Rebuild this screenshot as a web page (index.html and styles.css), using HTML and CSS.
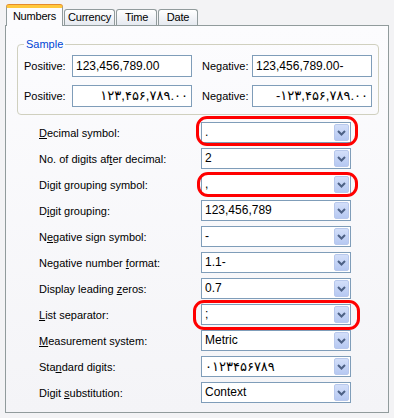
FILE: index.html
```html
<html>
<head>
	<title>Regional Options - Numbers</title>
	<meta charset="utf-8">
	<link rel="stylesheet" href="styles.css">
</head>
<body>
	<div class="dialog">
		<div class="tabs">
			<div class="tab active t-numbers">Numbers</div>
			<div class="tab t-currency">Currency</div>
			<div class="tab t-time">Time</div>
			<div class="tab t-date">Date</div>
		</div>

		<div class="page">
			<fieldset class="sample">
				<legend>Sample</legend>
				<div class="sample-grid">
					<span class="lbl">Positive:</span>
					<div class="box">123,456,789.00</div>
					<span class="lbl neg">Negative:</span>
					<div class="box">123,456,789.00-</div>

					<span class="lbl">Positive:</span>
					<div class="box rtl"><bdo dir="ltr">۱۲۳,۴۵۶,۷۸۹.۰۰</bdo></div>
					<span class="lbl neg">Negative:</span>
					<div class="box rtl"><bdo dir="ltr">-۱۲۳,۴۵۶,۷۸۹.۰۰</bdo></div>
				</div>
			</fieldset>

			<div class="settings">
				<div class="row">
					<span class="label"><u>D</u>ecimal symbol:</span>
					<div class="combo mark mark-1"><span class="value">.</span><span class="btn"><svg width="9" height="6" viewBox="0 0 9 6"><polyline points="1,1 4.5,4.5 8,1" /></svg></span></div>
				</div>
				<div class="row">
					<span class="label">No. of digits af<u>t</u>er decimal:</span>
					<div class="combo"><span class="value">2</span><span class="btn"><svg width="9" height="6" viewBox="0 0 9 6"><polyline points="1,1 4.5,4.5 8,1" /></svg></span></div>
				</div>
				<div class="row">
					<span class="label">Digit grouping symbol:</span>
					<div class="combo mark mark-2"><span class="value">,</span><span class="btn"><svg width="9" height="6" viewBox="0 0 9 6"><polyline points="1,1 4.5,4.5 8,1" /></svg></span></div>
				</div>
				<div class="row">
					<span class="label">D<u>i</u>git grouping:</span>
					<div class="combo"><span class="value">123,456,789</span><span class="btn"><svg width="9" height="6" viewBox="0 0 9 6"><polyline points="1,1 4.5,4.5 8,1" /></svg></span></div>
				</div>
				<div class="row">
					<span class="label">N<u>e</u>gative sign symbol:</span>
					<div class="combo"><span class="value">-</span><span class="btn"><svg width="9" height="6" viewBox="0 0 9 6"><polyline points="1,1 4.5,4.5 8,1" /></svg></span></div>
				</div>
				<div class="row">
					<span class="label">Negative number <u>f</u>ormat:</span>
					<div class="combo"><span class="value">1.1-</span><span class="btn"><svg width="9" height="6" viewBox="0 0 9 6"><polyline points="1,1 4.5,4.5 8,1" /></svg></span></div>
				</div>
				<div class="row">
					<span class="label">Display leading <u>z</u>eros:</span>
					<div class="combo"><span class="value">0.7</span><span class="btn"><svg width="9" height="6" viewBox="0 0 9 6"><polyline points="1,1 4.5,4.5 8,1" /></svg></span></div>
				</div>
				<div class="row">
					<span class="label"><u>L</u>ist separator:</span>
					<div class="combo mark mark-3"><span class="value">;</span><span class="btn"><svg width="9" height="6" viewBox="0 0 9 6"><polyline points="1,1 4.5,4.5 8,1" /></svg></span></div>
				</div>
				<div class="row">
					<span class="label"><u>M</u>easurement system:</span>
					<div class="combo"><span class="value">Metric</span><span class="btn"><svg width="9" height="6" viewBox="0 0 9 6"><polyline points="1,1 4.5,4.5 8,1" /></svg></span></div>
				</div>
				<div class="row">
					<span class="label">Sta<u>n</u>dard digits:</span>
					<div class="combo"><span class="value fa"><bdo dir="ltr">۰۱۲۳۴۵۶۷۸۹</bdo></span><span class="btn"><svg width="9" height="6" viewBox="0 0 9 6"><polyline points="1,1 4.5,4.5 8,1" /></svg></span></div>
				</div>
				<div class="row">
					<span class="label">Digit <u>s</u>ubstitution:</span>
					<div class="combo"><span class="value">Context</span><span class="btn"><svg width="9" height="6" viewBox="0 0 9 6"><polyline points="1,1 4.5,4.5 8,1" /></svg></span></div>
				</div>
			</div>
		</div>
	</div>
</body>
</html>
```

FILE: styles.css
```css
* {
	box-sizing:border-box;
}
body {
	margin:0;
	background-color:#f3f3f5;
	color:#000;
	font-family:"Liberation Sans", "DejaVu Sans", sans-serif;
	font-size:11px;
}
.dialog {
	padding:5px 5px 0 5px;
}
.tabs {
	display:flex;
	align-items:flex-end;
	height:21px;
	padding-left:1px;
	margin-bottom:-1px;
}
.tab {
	height:17px;
	line-height:15px;
	text-align:center;
	white-space:nowrap;
	letter-spacing:-0.2px;
	border:1px solid #919b9c;
	border-bottom:none;
	border-radius:3px 3px 0 0;
	background:linear-gradient(#ffffff, #e4e8ef);
	margin-right:1px;
}
.tab.active {
	position:relative;
	z-index:2;
	height:21px;
	line-height:17px;
	border-top:3px solid #ffc83c;
	background:#fcfcfe;
	box-shadow:0 -1px 0 #e68b2c;
}
.t-numbers { width:57px; }
.t-currency { width:51px; }
.t-time { width:41px; }
.t-date { width:40px; }
.page {
	position:relative;
	z-index:1;
	width:384px;
	height:388px;
	border:1px solid #919b9c;
	background:linear-gradient(#fcfcfe, #f4f4f7);
	padding:0 9px 0 11px;
}
.sample {
	margin:12px 0 0 0;
	padding:4px 6px 7px 6px;
	border:1px solid #d0d0bf;
	border-radius:4px;
}
.sample legend {
	color:#0046d5;
	padding:0 2px;
	line-height:13px;
}
.sample-grid {
	display:grid;
	grid-template-columns:48px 120px 60px 120px;
	grid-auto-rows:22px;
	row-gap:8px;
	align-items:center;
}
.lbl.neg {
	padding-left:10px;
}
.box {
	height:22px;
	line-height:20px;
	border:1px solid #7f9db9;
	background:#fff;
	padding:0 3px;
	font-size:12px;
	white-space:nowrap;
}
.box.rtl {
	text-align:right;
	font-size:13px;
}
.settings {
	margin-top:7px;
	padding-left:22px;
	display:flex;
	flex-direction:column;
	gap:5px;
}
.row {
	display:flex;
	align-items:center;
	height:21px;
}
.label {
	width:162px;
}
.combo {
	position:relative;
	display:flex;
	width:150px;
	height:21px;
	border:1px solid #7f9db9;
	background:#fff;
}
.combo .value {
	flex:1;
	line-height:19px;
	padding-left:3px;
	font-size:12px;
}
.combo .value.fa {
	font-size:13px;
}
.combo .btn {
	width:15px;
	margin:1px;
	display:flex;
	align-items:center;
	justify-content:center;
	border:1px solid #b8c8ec;
	border-radius:2px;
	background:linear-gradient(#d3dff9, #b6c8f2);
}
.combo .btn svg polyline {
	fill:none;
	stroke:#4d6185;
	stroke-width:2;
}
.mark::after {
	content:"";
	position:absolute;
	border:3px solid #ff0000;
	border-radius:11px;
}
.mark-1::after {
	top:-7px;
	bottom:-4px;
	left:-6px;
	right:-8px;
}
.mark-2::after {
	top:-3px;
	bottom:-3px;
	left:-5px;
	right:-8px;
}
.mark-3::after {
	top:-5px;
	bottom:-6px;
	left:-9px;
	right:-10px;
}
```
